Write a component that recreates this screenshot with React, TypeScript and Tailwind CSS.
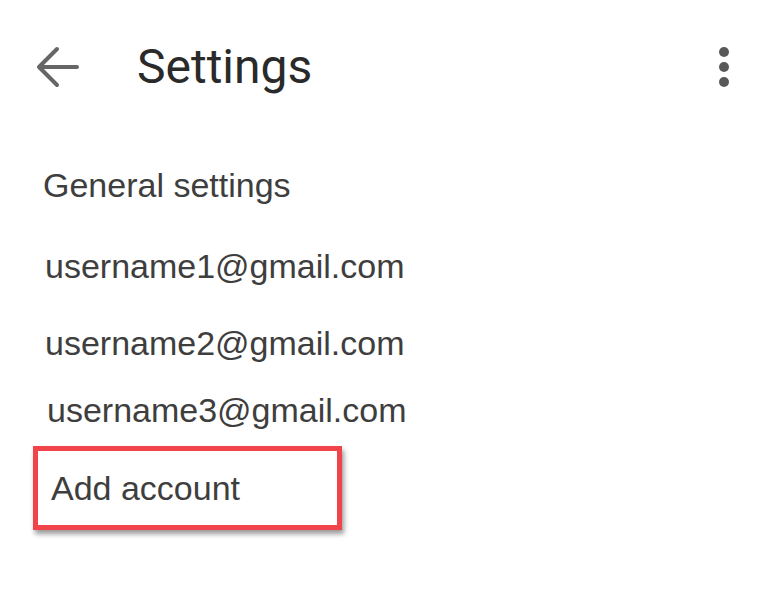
import React from "react";

const accounts = [
  { email: "username1@gmail.com", className: "mt-[47px] ml-[45px]" },
  { email: "username2@gmail.com", className: "mt-[43px] ml-[45px]" },
  { email: "username3@gmail.com", className: "mt-[33px] ml-[47px]" },
];

const App: React.FC = () => {
  return (
    <div className="w-[774px] h-[596px] bg-white overflow-hidden">
      {/* Top bar */}
      <div className="h-[134px] flex items-center">
        <button type="button" className="ml-[36px] w-[44px] h-[44px] flex items-center justify-center">
          <svg width="44" height="44" viewBox="0 0 44 44" fill="none">
            <path
              d="M4 22H41M21 4L3 22L21 40"
              stroke="#666666"
              strokeWidth="4"
              strokeLinecap="round"
              strokeLinejoin="round"
            />
          </svg>
        </button>
        <h1 className="ml-[57px] text-[48px] leading-[48px] text-[#2a2a2a] font-['Roboto',sans-serif] font-normal">
          Settings
        </h1>
        <button type="button" className="ml-auto mr-[44px] w-[12px] h-[44px] flex items-center justify-center">
          <svg width="12" height="44" viewBox="0 0 12 44">
            <circle cx="6" cy="7" r="5" fill="#595959" />
            <circle cx="6" cy="22" r="5" fill="#595959" />
            <circle cx="6" cy="37" r="5" fill="#595959" />
          </svg>
        </button>
      </div>

      {/* Settings list */}
      <div className="flex flex-col items-start font-['Liberation_Sans',Arial,sans-serif] text-[34px] leading-[34px] text-[#3e3e3e]">
        <div className="mt-[34px] ml-[43px]">General settings</div>
        {accounts.map((a) => (
          <div key={a.email} className={a.className}>
            {a.email}
          </div>
        ))}
        <div className="mt-[19px] ml-[33px] w-[309px] border-[5px] border-[#f0444a] pt-[20px] pb-[20px] pl-[13px] shadow-[2px_4px_5px_rgba(0,0,0,0.4)]">
          Add account
        </div>
      </div>
    </div>
  );
};

export default App;
